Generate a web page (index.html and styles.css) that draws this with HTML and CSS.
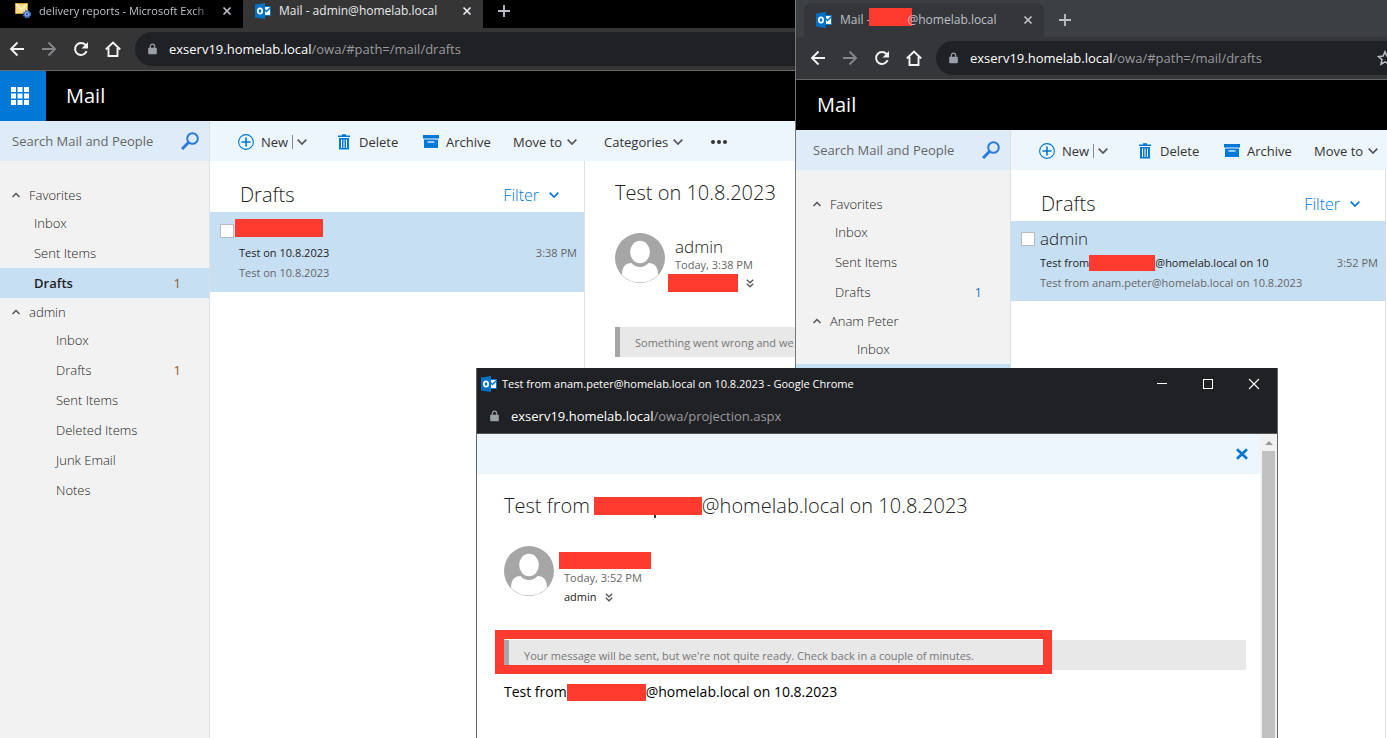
FILE: index.html
```html
<!DOCTYPE html>
<html lang="en">
<head>
<meta charset="utf-8">
<title>Mail - Drafts</title>
<link rel="stylesheet" href="styles.css">
</head>
<body>
<svg class="sprite" aria-hidden="true">
  <symbol id="i-outlook" viewBox="0 0 16 16"><path fill="#fff" stroke="#0072c6" d="M8 3.500h7.500v9H8z"/><path fill="none" stroke="#0072c6" stroke-width="1.500" d="M9 6l2.500 2.500L16 4"/><path fill="#0072c6" d="M0 1.500L10 0v16L0 14.500z"/><ellipse cx="5" cy="8" rx="2.200" ry="2.700" fill="none" stroke="#fff" stroke-width="1.700"/></symbol>
  <symbol id="i-reports" viewBox="0 0 16 16"><path fill="#f6dc83" stroke="#c99c32" d="M.5 .5h12v10H.5z"/><path fill="none" stroke="#fff6d0" stroke-width="1.500" d="M1 1l5.500 5.500L12 1"/><circle cx="12" cy="11.200" r="3" fill="#8fb0ea" stroke="#4a72c4" stroke-width="2.200" stroke-dasharray="1.600 .8"/><circle cx="12" cy="11.200" r="2.600" fill="#8fb0ea" stroke="#4a72c4"/><circle cx="12" cy="11.200" r="1" fill="#1f3b80"/></symbol>
  <symbol id="i-x" viewBox="0 0 10 10"><path fill="none" stroke="currentColor" stroke-width="1.700" d="M1.500 1.500l7 7M8.500 1.500l-7 7"/></symbol>
  <symbol id="i-xthin" viewBox="0 0 12 12"><path fill="none" stroke="currentColor" stroke-width="1.100" d="M1 1l10 10M11 1L1 11"/></symbol>
  <symbol id="i-xbold" viewBox="0 0 12 12"><path fill="none" stroke="currentColor" stroke-width="2.600" d="M1 1.200l10 9.600M11 1.200L1 10.800"/></symbol>
  <symbol id="i-plus" viewBox="0 0 12 12"><path fill="none" stroke="currentColor" stroke-width="1.800" d="M6 0v12M0 6h12"/></symbol>
  <symbol id="i-back" viewBox="0 0 16 16"><path fill="none" stroke="currentColor" stroke-width="1.900" d="M15 8H2M8.500 1.500L2 8l6.500 6.500"/></symbol>
  <symbol id="i-fwd" viewBox="0 0 16 16"><path fill="none" stroke="currentColor" stroke-width="1.900" d="M1 8h13M7.500 1.500L14 8l-6.500 6.500"/></symbol>
  <symbol id="i-reload" viewBox="0 0 16 16"><path fill="none" stroke="currentColor" stroke-width="2" d="M13.600 10.200A6 6 0 1 1 12.600 4"/><path fill="currentColor" d="M15 1v6.500H8.500z"/></symbol>
  <symbol id="i-home" viewBox="0 0 16 16"><path fill="none" stroke="currentColor" stroke-width="1.900" d="M.8 8.500L8 1.500l7.200 7M3.500 7v8h9V7"/></symbol>
  <symbol id="i-lock" viewBox="0 0 10 12"><path fill="currentColor" d="M1 4.500h8q.8 0 .8.8v5.700q0 .8-.8.8H1q-.8 0-.8-.8V5.300q0-.8.8-.8z"/><path fill="none" stroke="currentColor" stroke-width="1.300" d="M2.600 5V3a2.400 2.400 0 0 1 4.800 0v2"/></symbol>
  <symbol id="i-star" viewBox="0 0 16 16"><path fill="none" stroke="currentColor" stroke-width="1.500" d="M8 1.800l1.900 4.300 4.600.4-3.500 3.100 1 4.600L8 11.800l-4 2.400 1-4.600-3.500-3.100 4.600-.4z"/></symbol>
  <symbol id="i-grid" viewBox="0 0 18 18"><path fill="currentColor" d="M0 0h5v5H0zM6.500 0h5v5h-5zM13 0h5v5h-5zM0 6.500h5v5H0zM6.500 6.500h5v5h-5zM13 6.500h5v5h-5zM0 13h5v5H0zM6.500 13h5v5h-5zM13 13h5v5h-5z"/></symbol>
  <symbol id="i-search" viewBox="0 0 18 18"><circle cx="11.500" cy="6.500" r="5.300" fill="none" stroke="currentColor" stroke-width="2"/><path fill="none" stroke="currentColor" stroke-width="3" d="M7.500 10.500l-6.500 6.500"/></symbol>
  <symbol id="i-new" viewBox="0 0 16 16"><circle cx="8" cy="8" r="7.400" fill="none" stroke="currentColor" stroke-width="1.100"/><path fill="none" stroke="currentColor" stroke-width="1.600" d="M8 3.500v9M3.500 8h9"/></symbol>
  <symbol id="i-trash" viewBox="0 0 12 16"><path fill="currentColor" d="M0 1.500h4V.3h4v1.200h4V3H0zM1 4h10v11.500H1z"/><path stroke="#fff" fill="none" d="M3.500 5.500v8.500M6 5.500v8.500M8.500 5.500v8.500"/></symbol>
  <symbol id="i-archive" viewBox="0 0 16 14"><path fill="currentColor" d="M0 0h16v3.500H0zM1 4.500h14V13H1z"/><path stroke="#fff" stroke-width="1.200" d="M4.500 7h7"/></symbol>
  <symbol id="i-down" viewBox="0 0 10 6"><path fill="none" stroke="currentColor" stroke-width="1.700" d="M.7.7L5 5 9.300.7"/></symbol>
  <symbol id="i-up" viewBox="0 0 10 6"><path fill="none" stroke="currentColor" stroke-width="1.500" d="M1.500 5L5 1.500 8.500 5"/></symbol>
  <symbol id="i-dbl" viewBox="0 0 8 9"><path fill="none" stroke="currentColor" stroke-width="1.300" d="M.8.8L4 3.800 7.200.8M.8 4.800L4 7.800l3.200-3"/></symbol>
  <symbol id="i-person" viewBox="0 0 50 50"><circle cx="25" cy="25" r="25" fill="#a6a6a6"/><ellipse cx="25" cy="19" rx="9.800" ry="11.300" fill="#fff"/><path fill="#fff" d="M7 42q0-12 9.500-12 3.500 4 8.500 4t8.500-4Q43 30 43 42 35.500 49.500 25 49.500T7 42z"/></symbol>
</svg>

<main class="desktop">
  <section class="window window--left" aria-label="Mail of admin">
    <div class="tabstrip">
      <div class="tab">
        <svg class="i16"><use href="#i-reports"/></svg><span class="tab__title tab__title--fade">delivery reports - Microsoft Exch</span>
        <button class="bare" aria-label="Close tab"><svg class="i10"><use href="#i-x"/></svg></button>
      </div>
      <div class="tab tab--active">
        <svg class="i16"><use href="#i-outlook"/></svg><span class="tab__title">Mail - admin@homelab.local</span>
        <button class="bare" aria-label="Close tab"><svg class="i10"><use href="#i-x"/></svg></button>
      </div>
      <button class="bare newtab" aria-label="New tab"><svg class="i12"><use href="#i-plus"/></svg></button>
    </div>
    <div class="navbar">
      <button class="bare nav" aria-label="Back"><svg class="i16"><use href="#i-back"/></svg></button>
      <button class="bare nav nav--off" aria-label="Forward"><svg class="i16"><use href="#i-fwd"/></svg></button>
      <button class="bare nav" aria-label="Reload"><svg class="i16"><use href="#i-reload"/></svg></button>
      <button class="bare nav" aria-label="Home"><svg class="i16"><use href="#i-home"/></svg></button>
      <div class="omnibox"><svg class="lock"><use href="#i-lock"/></svg><span class="url"><b>exserv19.homelab.local</b>/owa/#path=/mail/drafts</span></div>
    </div>
    <header class="suite">
      <button class="bare launcher" aria-label="App launcher"><svg class="i18"><use href="#i-grid"/></svg></button>
      <h1 class="suite__name">Mail</h1>
    </header>
    <div class="mail">
      <nav class="side">
        <div class="search"><input class="search__box" type="text" placeholder="Search Mail and People" aria-label="Search Mail and People"><button class="bare" aria-label="Search"><svg class="i18"><use href="#i-search"/></svg></button></div>
        <div class="folders">
          <button class="bare group"><svg class="up"><use href="#i-up"/></svg>Favorites</button>
          <a class="folder" href="#">Inbox</a>
          <a class="folder" href="#">Sent Items</a>
          <a class="folder folder--on" href="#"><strong>Drafts</strong><span class="count--warm">1</span></a>
          <button class="bare group"><svg class="up"><use href="#i-up"/></svg>admin</button>
          <a class="folder folder--sub" href="#">Inbox</a>
          <a class="folder folder--sub" href="#">Drafts<span class="count--warm">1</span></a>
          <a class="folder folder--sub" href="#">Sent Items</a>
          <a class="folder folder--sub" href="#">Deleted Items</a>
          <a class="folder folder--sub" href="#">Junk Email</a>
          <a class="folder folder--sub" href="#">Notes</a>
        </div>
      </nav>
      <div class="work">
        <div class="commands">
          <button class="bare cmd cmd--new"><svg class="i16 blue"><use href="#i-new"/></svg>New<i class="split"></i><svg class="down"><use href="#i-down"/></svg></button>
          <button class="bare cmd cmd--delete"><svg class="trash blue"><use href="#i-trash"/></svg>Delete</button>
          <button class="bare cmd cmd--archive"><svg class="archive blue"><use href="#i-archive"/></svg>Archive</button>
          <button class="bare cmd cmd--move">Move to<svg class="down"><use href="#i-down"/></svg></button>
          <button class="bare cmd cmd--cat">Categories<svg class="down"><use href="#i-down"/></svg></button>
          <button class="bare cmd dots" aria-label="More"><i></i><i></i><i></i></button>
        </div>
        <div class="panes">
          <section class="list">
            <div class="list__head"><h2 class="list__title">Drafts</h2><button class="bare filter">Filter<svg class="down"><use href="#i-down"/></svg></button></div>
            <article class="item">
              <input class="item__check" type="checkbox" aria-label="Select message">
              <div class="item__body">
                <div class="item__from"><span class="mask mask--from"></span></div>
                <div class="item__row"><span class="item__subject">Test on 10.8.2023</span><time>3:38 PM</time></div>
                <div class="item__preview">Test on 10.8.2023</div>
              </div>
            </article>
          </section>
          <article class="reader">
            <h2 class="subject">Test on 10.8.2023</h2>
            <div class="sender">
              <svg class="avatar"><use href="#i-person"/></svg>
              <div class="sender__lines">
                <div class="sender__name">admin</div>
                <div class="sender__time">Today, 3:38 PM</div>
                <div class="sender__to"><span class="mask mask--to"></span><svg class="dbl"><use href="#i-dbl"/></svg></div>
              </div>
            </div>
            <p class="notice">Something went wrong and we couldn't</p>
          </article>
        </div>
      </div>
    </div>
  </section>

  <section class="window window--right" aria-label="Mail of Anam Peter">
    <div class="tabstrip">
      <div class="tab tab--active">
        <svg class="i16"><use href="#i-outlook"/></svg><span class="tab__title">Mail -<span class="mask mask--tab"></span>@homelab.local</span>
        <button class="bare" aria-label="Close tab"><svg class="i10"><use href="#i-x"/></svg></button>
      </div>
      <button class="bare newtab" aria-label="New tab"><svg class="i12"><use href="#i-plus"/></svg></button>
    </div>
    <div class="navbar">
      <button class="bare nav" aria-label="Back"><svg class="i16"><use href="#i-back"/></svg></button>
      <button class="bare nav nav--off" aria-label="Forward"><svg class="i16"><use href="#i-fwd"/></svg></button>
      <button class="bare nav" aria-label="Reload"><svg class="i16"><use href="#i-reload"/></svg></button>
      <button class="bare nav" aria-label="Home"><svg class="i16"><use href="#i-home"/></svg></button>
      <div class="omnibox"><svg class="lock"><use href="#i-lock"/></svg><span class="url"><b>exserv19.homelab.local</b>/owa/#path=/mail/drafts</span><svg class="i16 star"><use href="#i-star"/></svg></div>
    </div>
    <header class="suite"><h1 class="suite__name">Mail</h1></header>
    <div class="mail">
      <nav class="side">
        <div class="search"><input class="search__box" type="text" placeholder="Search Mail and People" aria-label="Search Mail and People"><button class="bare" aria-label="Search"><svg class="i18"><use href="#i-search"/></svg></button></div>
        <div class="folders">
          <button class="bare group"><svg class="up"><use href="#i-up"/></svg>Favorites</button>
          <a class="folder" href="#">Inbox</a>
          <a class="folder" href="#">Sent Items</a>
          <a class="folder" href="#">Drafts<span class="count--blue">1</span></a>
          <button class="bare group"><svg class="up"><use href="#i-up"/></svg>Anam Peter</button>
          <a class="folder folder--sub" href="#">Inbox</a>
          <div class="folder folder--on"></div>
        </div>
      </nav>
      <div class="work">
        <div class="commands">
          <button class="bare cmd cmd--new"><svg class="i16 blue"><use href="#i-new"/></svg>New<i class="split"></i><svg class="down"><use href="#i-down"/></svg></button>
          <button class="bare cmd cmd--delete"><svg class="trash blue"><use href="#i-trash"/></svg>Delete</button>
          <button class="bare cmd cmd--archive"><svg class="archive blue"><use href="#i-archive"/></svg>Archive</button>
          <button class="bare cmd cmd--move">Move to<svg class="down"><use href="#i-down"/></svg></button>
        </div>
        <div class="panes">
          <section class="list">
            <div class="list__head"><h2 class="list__title">Drafts</h2><button class="bare filter">Filter<svg class="down"><use href="#i-down"/></svg></button></div>
            <article class="item">
              <input class="item__check" type="checkbox" aria-label="Select message">
              <div class="item__body">
                <div class="item__from">admin</div>
                <div class="item__row"><span class="item__subject">Test from<span class="mask mask--line"></span>@homelab.local on 10</span><time>3:52 PM</time></div>
                <div class="item__preview">Test from anam.peter@homelab.local on 10.8.2023</div>
              </div>
            </article>
          </section>
        </div>
      </div>
    </div>
  </section>

  <section class="popup" aria-label="Message window">
    <div class="popup__chrome">
      <div class="popup__bar">
        <svg class="i16"><use href="#i-outlook"/></svg><span class="popup__title">Test from anam.peter@homelab.local on 10.8.2023 - Google Chrome</span>
        <button class="bare wbtn" aria-label="Minimize"><i class="min"></i></button>
        <button class="bare wbtn" aria-label="Maximize"><i class="max"></i></button>
        <button class="bare wbtn" aria-label="Close"><svg class="i12"><use href="#i-xthin"/></svg></button>
      </div>
      <div class="popup__url"><svg class="lock"><use href="#i-lock"/></svg><span class="url"><b>exserv19.homelab.local</b>/owa/projection.aspx</span></div>
    </div>
    <div class="popup__view">
      <div class="popup__page">
        <div class="closebar"><button class="bare blue" aria-label="Close message"><svg class="i12"><use href="#i-xbold"/></svg></button></div>
        <article class="message">
          <h2 class="subject">Test from<span class="mask mask--subject"></span>@homelab.local on 10.8.2023</h2>
          <div class="sender">
            <svg class="avatar"><use href="#i-person"/></svg>
            <div class="sender__lines">
              <div class="sender__name"><span class="mask mask--name"></span></div>
              <div class="sender__time">Today, 3:52 PM</div>
              <div class="sender__to">admin<svg class="dbl"><use href="#i-dbl"/></svg></div>
            </div>
          </div>
          <p class="notice">Your message will be sent, but we're not quite ready. Check back in a couple of minutes.<span class="highlight"></span></p>
          <p class="text">Test from<span class="mask mask--text"></span>@homelab.local on 10.8.2023</p>
        </article>
      </div>
      <div class="scroll"><i class="scroll__up"></i><div class="scroll__thumb"></div></div>
    </div>
  </section>
</main>
</body>
</html>
```
FILE: styles.css
```css
* { box-sizing: border-box; }
body { margin: 0; font: 300 13px/20px "Open Sans", "Noto Sans", sans-serif; color: #222; }
h1, h2, p { margin: 0; font-weight: inherit; }
svg { display: block; flex: none; }
i { display: block; }
.sprite { position: absolute; width: 0; height: 0; }
.bare { display: flex; align-items: center; padding: 0; border: 0; background: none; font: inherit; color: inherit; white-space: nowrap; }
.blue { color: #0078d7; }
.mask { display: inline-block; background: #ff3b30; }
.i10 { width: 10px; height: 10px; }
.i12 { width: 12px; height: 12px; }
.i16 { width: 16px; height: 16px; }
.i18 { width: 18px; height: 18px; }
.lock { width: 9px; height: 12px; color: #9aa0a6; }
.down { width: 10px; height: 6px; color: #555; }
.up { width: 10px; height: 6px; color: #555; }
.dbl { width: 8px; height: 9px; color: #555; }

.desktop { position: relative; height: 100vh; overflow: hidden; background: #fff; }
.window { position: absolute; top: 0; right: 0; bottom: 0; display: flex; flex-direction: column; overflow: hidden; background: #fff; border-left: 1px solid #777; }
.window--left { left: -6px; --chrome: #353535; --strip: #000; }
.window--right { left: 795px; --chrome: #35363a; --strip: #3c4043; }

/* Browser chrome */
.tabstrip { display: flex; align-items: flex-end; flex: none; height: 37px; padding-left: 8px; background: var(--strip); color: #bdc1c6; font-weight: 400; font-size: 12px; }
.window--left .tabstrip { height: 28px; }
.tab { display: flex; align-items: center; flex: none; width: 240px; height: 34px; padding: 0 11px 0 12px; gap: 8px; border-radius: 8px 8px 0 0; }
.tab--active { background: var(--chrome); }
.window--left .tab--active { color: #e8eaed; }
.tab__title { display: flex; align-items: center; flex: 1; white-space: nowrap; }
.tab__title--fade { font-size: 11px; -webkit-mask-image: linear-gradient(90deg, #000 88%, transparent); mask-image: linear-gradient(90deg, #000 88%, transparent); }
.newtab { height: 34px; margin-left: 15px; }
.navbar { display: flex; align-items: center; flex: none; height: 43px; padding-left: 14px; gap: 16px; background: var(--chrome); border-bottom: 1px solid #666; color: #f1f3f4; }
.nav--off { color: #85868a; }
.omnibox { display: flex; align-items: center; flex: 1; height: 34px; margin-left: -2px; padding-left: 13px; gap: 12px; border-radius: 17px 0 0 17px; background: #202124; overflow: hidden; }
.url { flex: 1; color: #9a9b9e; font-weight: 400; font-size: 13px; white-space: nowrap; }
.url b { color: #fff; font-weight: 400; }
.star { margin-right: -6px; color: #bdc1c6; }

/* Suite header */
.suite { display: flex; align-items: center; flex: none; height: 50px; padding-left: 5px; gap: 4px; background: #000; color: #fff; }
.launcher { justify-content: center; width: 46px; height: 50px; padding-right: 6px; background: #0078d7; }
.suite__name { padding-left: 16px; font-size: 20px; line-height: 28px; font-weight: 400; }

/* Mail layout */
.mail { display: flex; flex: 1; min-height: 0; }
.side { flex: none; width: 215px; background: #f2f2f2; border-right: 1px solid #dcdfe3; }
.search { display: flex; align-items: center; height: 40px; padding: 0 10px 0 17px; background: #deecf9; color: #2b7cd8; }
.search__box { flex: 1; min-width: 0; padding: 0; border: 0; background: none; font: inherit; font-weight: 400; }
.search__box::placeholder { color: #666; opacity: 1; }
.folders { padding-top: 20px; }
.group { width: 100%; height: 27px; padding-left: 16px; gap: 8px; }
.folder { display: flex; align-items: center; justify-content: space-between; height: 30px; padding: 0 28px 0 39px; color: inherit; text-decoration: none; }
.folder--sub { padding-left: 61px; }
.folder--on { background: #c7dff3; }
.folder strong { font-weight: 600; }
.count--warm { color: #8a5a2b; font-weight: 400; }
.count--blue { color: #2a76c4; font-weight: 400; }
.work { display: flex; flex-direction: column; flex: 1; min-width: 0; }
.commands { display: flex; flex: none; height: 40px; padding: 2px 0 0 28px; background: #eef6fd; color: #333; font-weight: 400; overflow: hidden; }
.cmd { flex: none; gap: 7px; }
.cmd--new { width: 100px; }
.cmd--delete { width: 85px; gap: 9px; }
.cmd--archive { width: 90px; }
.cmd--move { width: 91px; gap: 5px; }
.cmd--cat { width: 107px; gap: 5px; }
.split { width: 1px; height: 14px; margin-right: -3px; margin-left: -3px; background: #888; }
.trash { width: 12px; height: 16px; }
.archive { width: 16px; height: 14px; }
.dots { gap: 2px; }
.dots i { width: 4px; height: 4px; border-radius: 50%; background: #333; }
.panes { display: flex; flex: 1; min-height: 0; }
.list { flex: none; width: 375px; border-right: 1px solid #dcdfe3; }
.list__head { display: flex; align-items: center; justify-content: space-between; height: 51px; padding: 16px 25px 0 30px; }
.list__title { font-size: 20px; line-height: 28px; }
.filter { gap: 10px; color: #0078d7; font-size: 16px; }
.filter .down { color: #0078d7; }
.item { display: flex; height: 80px; padding: 5px 7px 0 10px; gap: 5px; background: #c7dff3; }
.item__check { appearance: none; flex: none; width: 14px; height: 14px; margin: 7px 0 0; border: 1px solid #bbb; background: #fff; }
.item__body { flex: 1; min-width: 0; font-size: 11px; }
.item__from { display: flex; align-items: center; height: 26px; font-size: 17px; }
.item__row { display: flex; justify-content: space-between; color: #222; white-space: nowrap; }
.item__subject { display: flex; align-items: center; font-weight: 400; }
.item__row time, .item__preview { color: #666; font-weight: 400; }
.reader { flex: 1; min-width: 0; padding: 17px 20px 0 30px; }
.subject { display: flex; align-items: center; font-size: 20px; line-height: 30px; white-space: pre; }
.sender { display: flex; margin-top: 25px; gap: 10px; }
.avatar { width: 50px; height: 50px; }
.sender__lines { height: 60px; font-size: 11px; }
.sender__name { height: 24px; font-size: 17px; line-height: 28px; }
.sender__time { height: 16px; line-height: 16px; color: #666; font-weight: 400; }
.sender__to { display: flex; align-items: center; height: 20px; gap: 8px; font-weight: 400; }
.notice { position: relative; height: 30px; margin-top: 34px; padding-left: 15px; border-left: 5px solid #a6a6a6; background: #e8e8e8; color: #777; font-weight: 400; font-size: 11px; line-height: 32px; white-space: nowrap; }
.window--right .item { padding-top: 4px; }
.window--right .item__from { height: 28px; }

.mask--from { width: 88px; height: 18px; margin: -4px 0 0 -4px; }
.mask--to { width: 70px; height: 18px; margin-left: -7px; }
.mask--tab { width: 43px; height: 18px; margin: -6px -4px 0 -2px; }
.mask--line { width: 66px; height: 16px; }
.mask--subject { position: relative; width: 108px; height: 18px; margin-left: 4px; }
.mask--subject::after { content: ""; position: absolute; top: 18px; left: 60px; width: 2px; height: 3px; background: #333; }
.mask--name { display: block; width: 92px; height: 17px; }
.mask--text { width: 79px; height: 17px; }
.window--left .item__row, .window--left .item__preview { margin-left: 0; }

/* Message popup */
.popup { position: absolute; top: 368px; bottom: 0; left: 476px; width: 802px; display: flex; flex-direction: column; background: #fff; border: solid #666; border-width: 0 1px; }
.popup__chrome { background: #202124; color: #fff; border-bottom: 1px solid #555; }
.popup__bar { display: flex; align-items: center; height: 31px; padding-left: 4px; font-size: 11px; font-weight: 400; }
.popup__title { flex: 1; padding-left: 5px; white-space: nowrap; overflow: hidden; }
.wbtn { justify-content: center; width: 46px; height: 31px; }
.min { width: 10px; height: 1px; background: #fff; }
.max { width: 10px; height: 10px; border: 1px solid #fff; }
.popup__url { display: flex; align-items: center; height: 34px; padding-left: 13px; gap: 12px; }
.popup__view { display: flex; flex: 1; min-height: 0; }
.popup__page { flex: 1; min-width: 0; }
.closebar { display: flex; justify-content: flex-end; align-items: center; height: 40px; padding-right: 12px; background: #eef6fd; }
.message { padding: 17px 14px 0 27px; }
.message .sender__lines { padding-top: 6px; }
.message .sender__name { height: 18px; margin-left: -5px; }
.message .sender__to { height: 22px; }
.highlight { position: absolute; top: -10px; left: -14px; width: 557px; height: 44px; border: 9px solid #ff3b30; }
.text { display: flex; align-items: center; margin-top: 12px; color: #000; font-size: 14px; font-weight: 400; white-space: pre; }
.scroll { display: flex; flex-direction: column; align-items: center; width: 17px; background: #f1f1f1; }
.scroll__up { margin: 7px 0 6px; border: solid transparent; border-width: 0 4px 4px; border-bottom-color: #999; }
.scroll__thumb { flex: 1; width: 13px; background: #c1c1c1; }
```
